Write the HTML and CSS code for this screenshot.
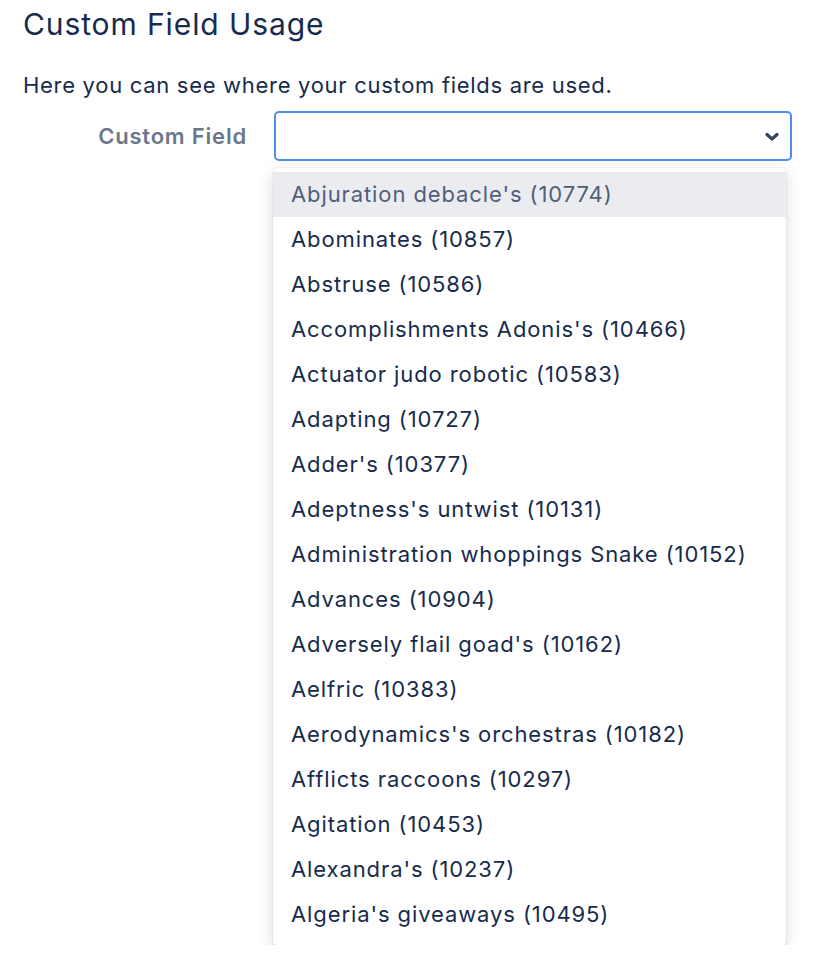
FILE: index.html
```html
<!DOCTYPE html>
<html>
<head>
<meta charset="utf-8">
<link rel="stylesheet" href="styles.css">
</head>
<body>
<main class="page">
  <h1 class="title">Custom Field Usage</h1>
  <p class="intro">Here you can see where your custom fields are used.</p>
  <div class="field-row">
    <div class="field-label">Custom Field</div>
    <div class="select-wrap">
      <div class="select">
        <svg class="chevron" width="14" height="10" viewBox="0 0 14 10"><path d="M2 2.5 L7 7 L12 2.5" fill="none" stroke="#344563" stroke-width="3.2" stroke-linecap="round" stroke-linejoin="round"/></svg>
      </div>
      <div class="listbox">
        <div class="item hovered">Abjuration debacle's (10774)</div>
        <div class="item">Abominates (10857)</div>
        <div class="item">Abstruse (10586)</div>
        <div class="item">Accomplishments Adonis's (10466)</div>
        <div class="item">Actuator judo robotic (10583)</div>
        <div class="item">Adapting (10727)</div>
        <div class="item">Adder's (10377)</div>
        <div class="item">Adeptness's untwist (10131)</div>
        <div class="item">Administration whoppings Snake (10152)</div>
        <div class="item">Advances (10904)</div>
        <div class="item">Adversely flail goad's (10162)</div>
        <div class="item">Aelfric (10383)</div>
        <div class="item">Aerodynamics's orchestras (10182)</div>
        <div class="item">Afflicts raccoons (10297)</div>
        <div class="item">Agitation (10453)</div>
        <div class="item">Alexandra's (10237)</div>
        <div class="item">Algeria's giveaways (10495)</div>
      </div>
    </div>
  </div>
</main>
</body>
</html>
```
FILE: styles.css
```css
html, body {
  margin: 0;
  padding: 0;
  background: #ffffff;
}
body {
  font-family: Inter, "Noto Sans", "Liberation Sans", sans-serif;
  color: #172b4d;
}
.page {
  padding: 6px 0 0 23px;
}
.title {
  margin: 0;
  font-size: 30px;
  font-weight: 400;
  line-height: 36px;
  letter-spacing: 0.9px;
}
.intro {
  margin: 30px 0 0 0;
  font-size: 22px;
  line-height: 26px;
  letter-spacing: 0.7px;
}
.field-row {
  display: grid;
  grid-template-columns: 224px 518px;
  column-gap: 27px;
  margin-top: 13px;
  align-items: start;
}
.field-label {
  text-align: right;
  font-size: 22px;
  font-weight: 600;
  color: #6b778c;
  line-height: 50px;
  letter-spacing: 0.8px;
}
.select-wrap {
  display: flex;
  flex-direction: column;
  gap: 7px;
}
.select {
  box-sizing: border-box;
  height: 50px;
  border: 2px solid #4c8df0;
  border-radius: 5px;
  background: #fff;
  position: relative;
}
.chevron {
  position: absolute;
  right: 11px;
  top: 19px;
}
.listbox {
  margin-left: -1px;
  width: 513px;
  padding: 4px 0 8px 0;
  background: #fff;
  border-radius: 4px;
  box-shadow: 0 5px 14px rgba(9, 30, 66, 0.17), 0 0 1px rgba(9, 30, 66, 0.31);
}
.item {
  height: 45px;
  line-height: 45px;
  padding-left: 18px;
  font-size: 22px;
  letter-spacing: 0.9px;
  color: #172b4d;
  white-space: nowrap;
}
.item.hovered {
  background: #ebecf0;
  color: #505f79;
}
```
